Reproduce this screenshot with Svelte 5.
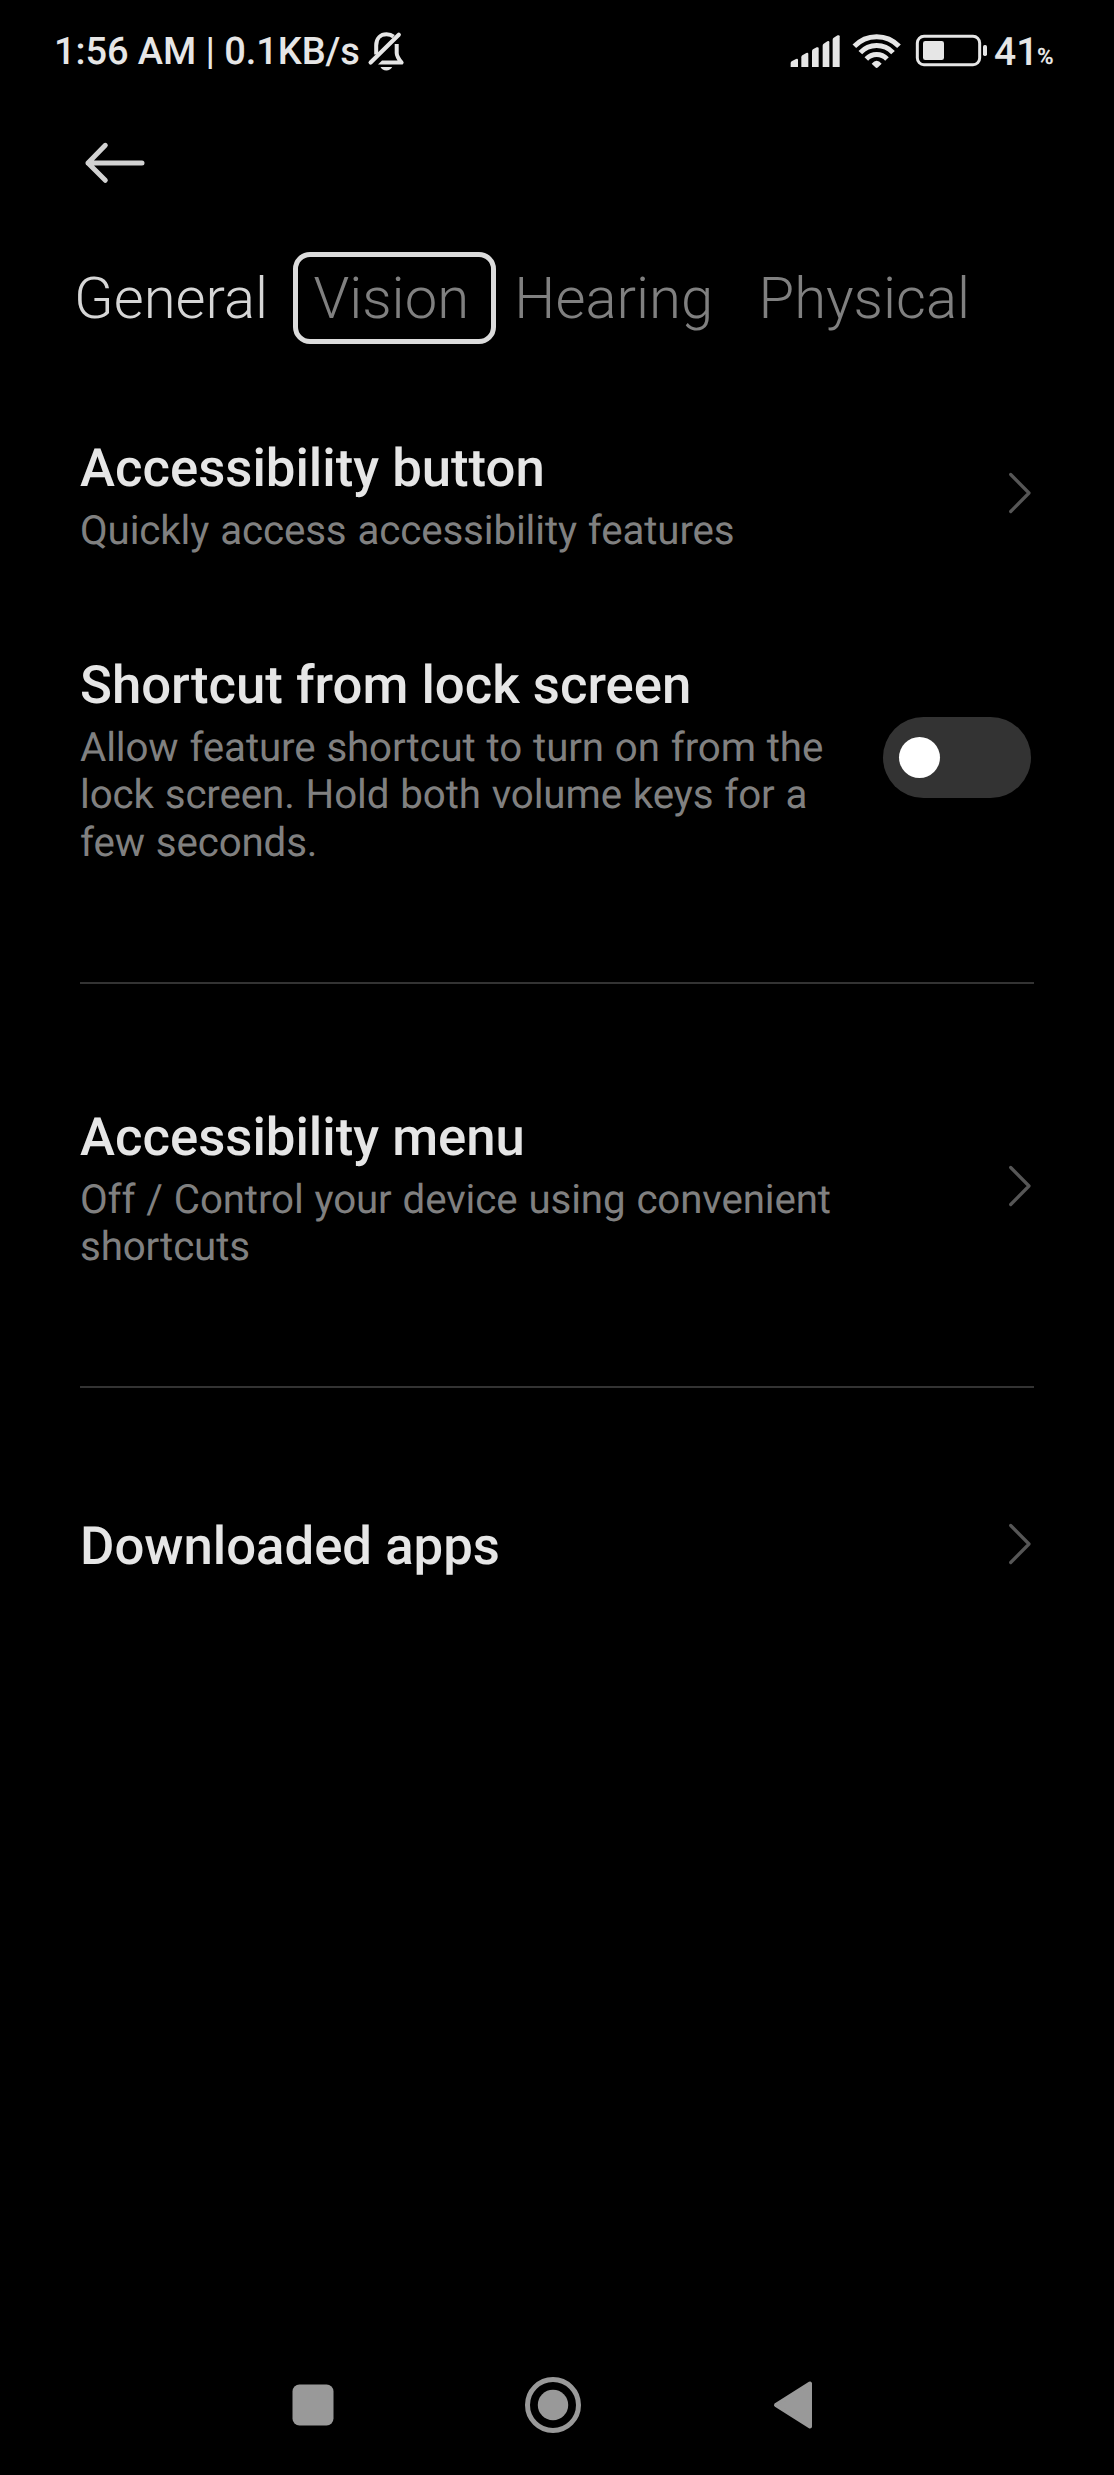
<script>
  let activeTab = $state('General');
  let lockShortcut = $state(false);

  const tabs = ['General', 'Vision', 'Hearing', 'Physical'];
  const focusedTab = 'Vision';

  const groups = [
    [
      { title: 'Accessibility button', summary: ['Quickly access accessibility features'] },
      {
        title: 'Shortcut from lock screen',
        summary: [
          'Allow feature shortcut to turn on from the',
          'lock screen. Hold both volume keys for a',
          'few seconds.'
        ],
        toggle: true
      }
    ],
    [
      {
        title: 'Accessibility menu',
        summary: ['Off / Control your device using convenient', 'shortcuts']
      }
    ],
    [{ title: 'Downloaded apps' }]
  ];
</script>

<div class="screen">
  <header class="status">
    <span class="clock">1:56 AM | 0.1KB/s</span>
    <svg class="bell" viewBox="366 30 40 42">
      <g fill="none" stroke="#e6e6e6" stroke-width="4.2" stroke-linecap="round">
        <path d="M370.6 62.6 398.8 34.8" />
        <path d="M376.2 54.5V45.5C376.2 38 380.8 34.3 386.5 34.3C389.5 34.3 391.6 35 393.6 36.6" stroke-width="4" stroke-linecap="butt" />
        <path d="M396.7 44V53C396.7 56.5 398 58.3 401.6 62.6H382" stroke-width="4" stroke-linecap="butt" stroke-linejoin="round" />
      </g>
      <path d="M378 64.6 382 60.5V64.6Z" fill="#e6e6e6" />
      <path d="M380.5 67H392.2C391 69.3 389 70.4 386.3 70.4S381.6 69.3 380.5 67Z" fill="#e6e6e6" />
    </svg>
    <span class="spacer"></span>
    <svg class="signal" viewBox="60 42 150 102" fill="#e6e6e6">
      <path d="M62 141V129Q62 126 65 124L78 117Q84 115 84 120V141Z" />
      <path d="M94 141V112Q94 108 97 106L109 99Q115 97 115 102V141Z" />
      <path d="M126 141V94Q126 90 129 88L140 82Q146 80 146 85V141Z" />
      <path d="M158 141V77Q158 73 161 71L172 64Q178 61 178 67V141Z" />
      <path d="M188 141V59Q188 55 191 53L203 46Q209 44 209 49V141Z" />
    </svg>
    <svg class="wifi" viewBox="246 36 150 111">
      <g fill="none" stroke="#e6e6e6" stroke-width="15">
        <path d="M253 79A92 92 0 0 1 387 79" />
        <path d="M271 98A67 67 0 0 1 369 98" />
        <path d="M289 117A43 43 0 0 1 351 117" />
      </g>
      <path d="M305 131Q320 114 335 131L324 142Q320 146 316 142Z" fill="#e6e6e6" />
    </svg>
    <svg class="battery" viewBox="435 42 219 99">
      <rect x="442" y="49" width="187" height="85" rx="20" fill="none" stroke="#e6e6e6" stroke-width="9" />
      <rect x="459" y="63" width="63" height="57" rx="7" fill="#e6e6e6" />
      <rect x="639" y="75" width="12" height="33" rx="5" fill="#e6e6e6" />
    </svg>
    <span class="level">41</span><span class="percent">%</span>
  </header>

  <div class="appbar">
    <svg class="back" viewBox="82 140 66 46" aria-label="Back">
      <path d="M142 163H88M105.3 145.3 88 163 105.3 180.3" fill="none" stroke="#d2d2d2" stroke-width="5" stroke-linecap="round" stroke-linejoin="round" />
    </svg>
  </div>

  <nav class="tabs">
    {#each tabs as tab}
      <button class="tab" class:active={tab === activeTab} class:focused={tab === focusedTab} onclick={() => (activeTab = tab)}>{tab}</button>
    {/each}
  </nav>

  <main>
    {#each groups as group, i}
      {#if i > 0}<hr />{/if}
      {#each group as item}
        <section class="row" class:single={!item.summary}>
          <div class="text">
            <h2>{item.title}</h2>
            {#if item.summary}
              <p>{#each item.summary as line}<span>{line}</span>{/each}</p>
            {/if}
          </div>
          {#if item.toggle}
            <button class="switch" class:on={lockShortcut} aria-label={item.title} onclick={() => (lockShortcut = !lockShortcut)}>
              <i></i>
            </button>
          {:else}
            <svg class="chevron" viewBox="0 0 24 44">
              <path d="M2.7 3.5 21 22 2.7 40.5" fill="none" stroke="#565656" stroke-width="3.2" stroke-linecap="round" stroke-linejoin="round" />
            </svg>
          {/if}
        </section>
      {/each}
    {/each}
  </main>

  <footer class="navbar">
    <svg viewBox="0 0 60 60"><rect x="9.5" y="9.5" width="41" height="41" rx="7" fill="#999" /></svg>
    <svg viewBox="0 0 60 60">
      <circle cx="30" cy="30" r="25.5" fill="none" stroke="#999" stroke-width="5" />
      <circle cx="30" cy="30" r="15.2" fill="#999" />
    </svg>
    <svg viewBox="0 0 60 60">
      <path d="M13 30 47 8.5V51.5Z" fill="#999" stroke="#999" stroke-width="4" stroke-linejoin="round" />
    </svg>
  </footer>
</div>

<style>
  :global(body) {
    background: #000;
  }
  .screen {
    box-sizing: border-box;
    width: 1114px;
    height: 2475px;
    background: #000;
    color: #e6e6e6;
    font-family: Roboto, 'Liberation Sans', sans-serif;
    text-rendering: geometricPrecision;
    display: flex;
    flex-direction: column;
    overflow: hidden;
  }
  svg {
    display: block;
    flex: none;
  }
  button {
    border: 0;
    padding: 0;
    margin: 0;
    background: none;
    font: inherit;
    color: inherit;
  }
  .status {
    height: 58px;
    padding: 30px 60px 0 54px;
    display: flex;
    align-items: flex-start;
    font-size: 38px;
    line-height: 44px;
    font-weight: 500;
    white-space: nowrap;
  }
  .clock {
    width: 307px;
    letter-spacing: -0.08px;
  }
  .bell {
    width: 40px;
    height: 42px;
    margin-left: 5px;
  }
  .spacer {
    flex: 1;
  }
  .signal {
    width: 50px;
    height: 34px;
    margin: 4px 12px 0 0;
  }
  .wifi {
    width: 50px;
    height: 37px;
    margin: 2px 13px 0 0;
  }
  .battery {
    width: 73px;
    height: 33px;
    margin: 4px 6px 0 0;
  }
  .level {
    font-size: 39px;
    width: 43px;
  }
  .percent {
    font-size: 22.5px;
    line-height: 26px;
    margin-top: 14px;
    width: 17px;
    font-weight: 700;
  }
  .appbar {
    height: 150px;
    padding-left: 82px;
    display: flex;
    align-items: center;
  }
  .back {
    width: 66px;
    height: 46px;
  }
  .tabs {
    display: flex;
    gap: 45.3px;
    padding: 25.5px 74px 55.5px;
  }
  .tab {
    position: relative;
    font-size: 58px;
    line-height: 68px;
    font-weight: 300;
    color: #808080;
  }
  .tab.active {
    color: #d6d6d6;
  }
  .tab.focused::after {
    content: '';
    position: absolute;
    box-sizing: border-box;
    inset: -12px -26.5px -12px -20.5px;
    border: 5px solid #dcdcdc;
    border-radius: 17px;
  }
  main {
    flex: 1;
    padding: 0 80px;
  }
  .row {
    display: flex;
    align-items: center;
    justify-content: space-between;
    padding: 50.5px 2px 50.5px 0;
  }
  .row.single {
    padding-top: 56px;
  }
  h2 {
    margin: 0;
    font-size: 52.7px;
    line-height: 61px;
    font-weight: 500;
  }
  p {
    margin: 8px 0 0;
    font-size: 40.3px;
    line-height: 47.4px;
    letter-spacing: -0.13px;
    word-spacing: 1.1px;
    color: #808080;
  }
  p span {
    display: block;
    white-space: nowrap;
  }
  .chevron {
    width: 24px;
    height: 44px;
    margin-bottom: 5px;
  }
  .switch {
    width: 147.5px;
    height: 81px;
    border-radius: 41px;
    background: #333;
    margin: 0 1.5px 7px 0;
    padding: 0 16px;
    display: flex;
    align-items: center;
  }
  .switch.on {
    justify-content: flex-end;
  }
  .switch i {
    width: 41px;
    height: 41px;
    border-radius: 50%;
    background: #fff;
  }
  hr {
    border: 0;
    height: 2px;
    margin: 65px 0 72.5px;
    background: #333;
  }
  .navbar {
    height: 140px;
    padding: 0 291px 0 283px;
    display: flex;
    justify-content: space-between;
    align-items: center;
  }
  .navbar svg {
    width: 60px;
    height: 60px;
  }
</style>
